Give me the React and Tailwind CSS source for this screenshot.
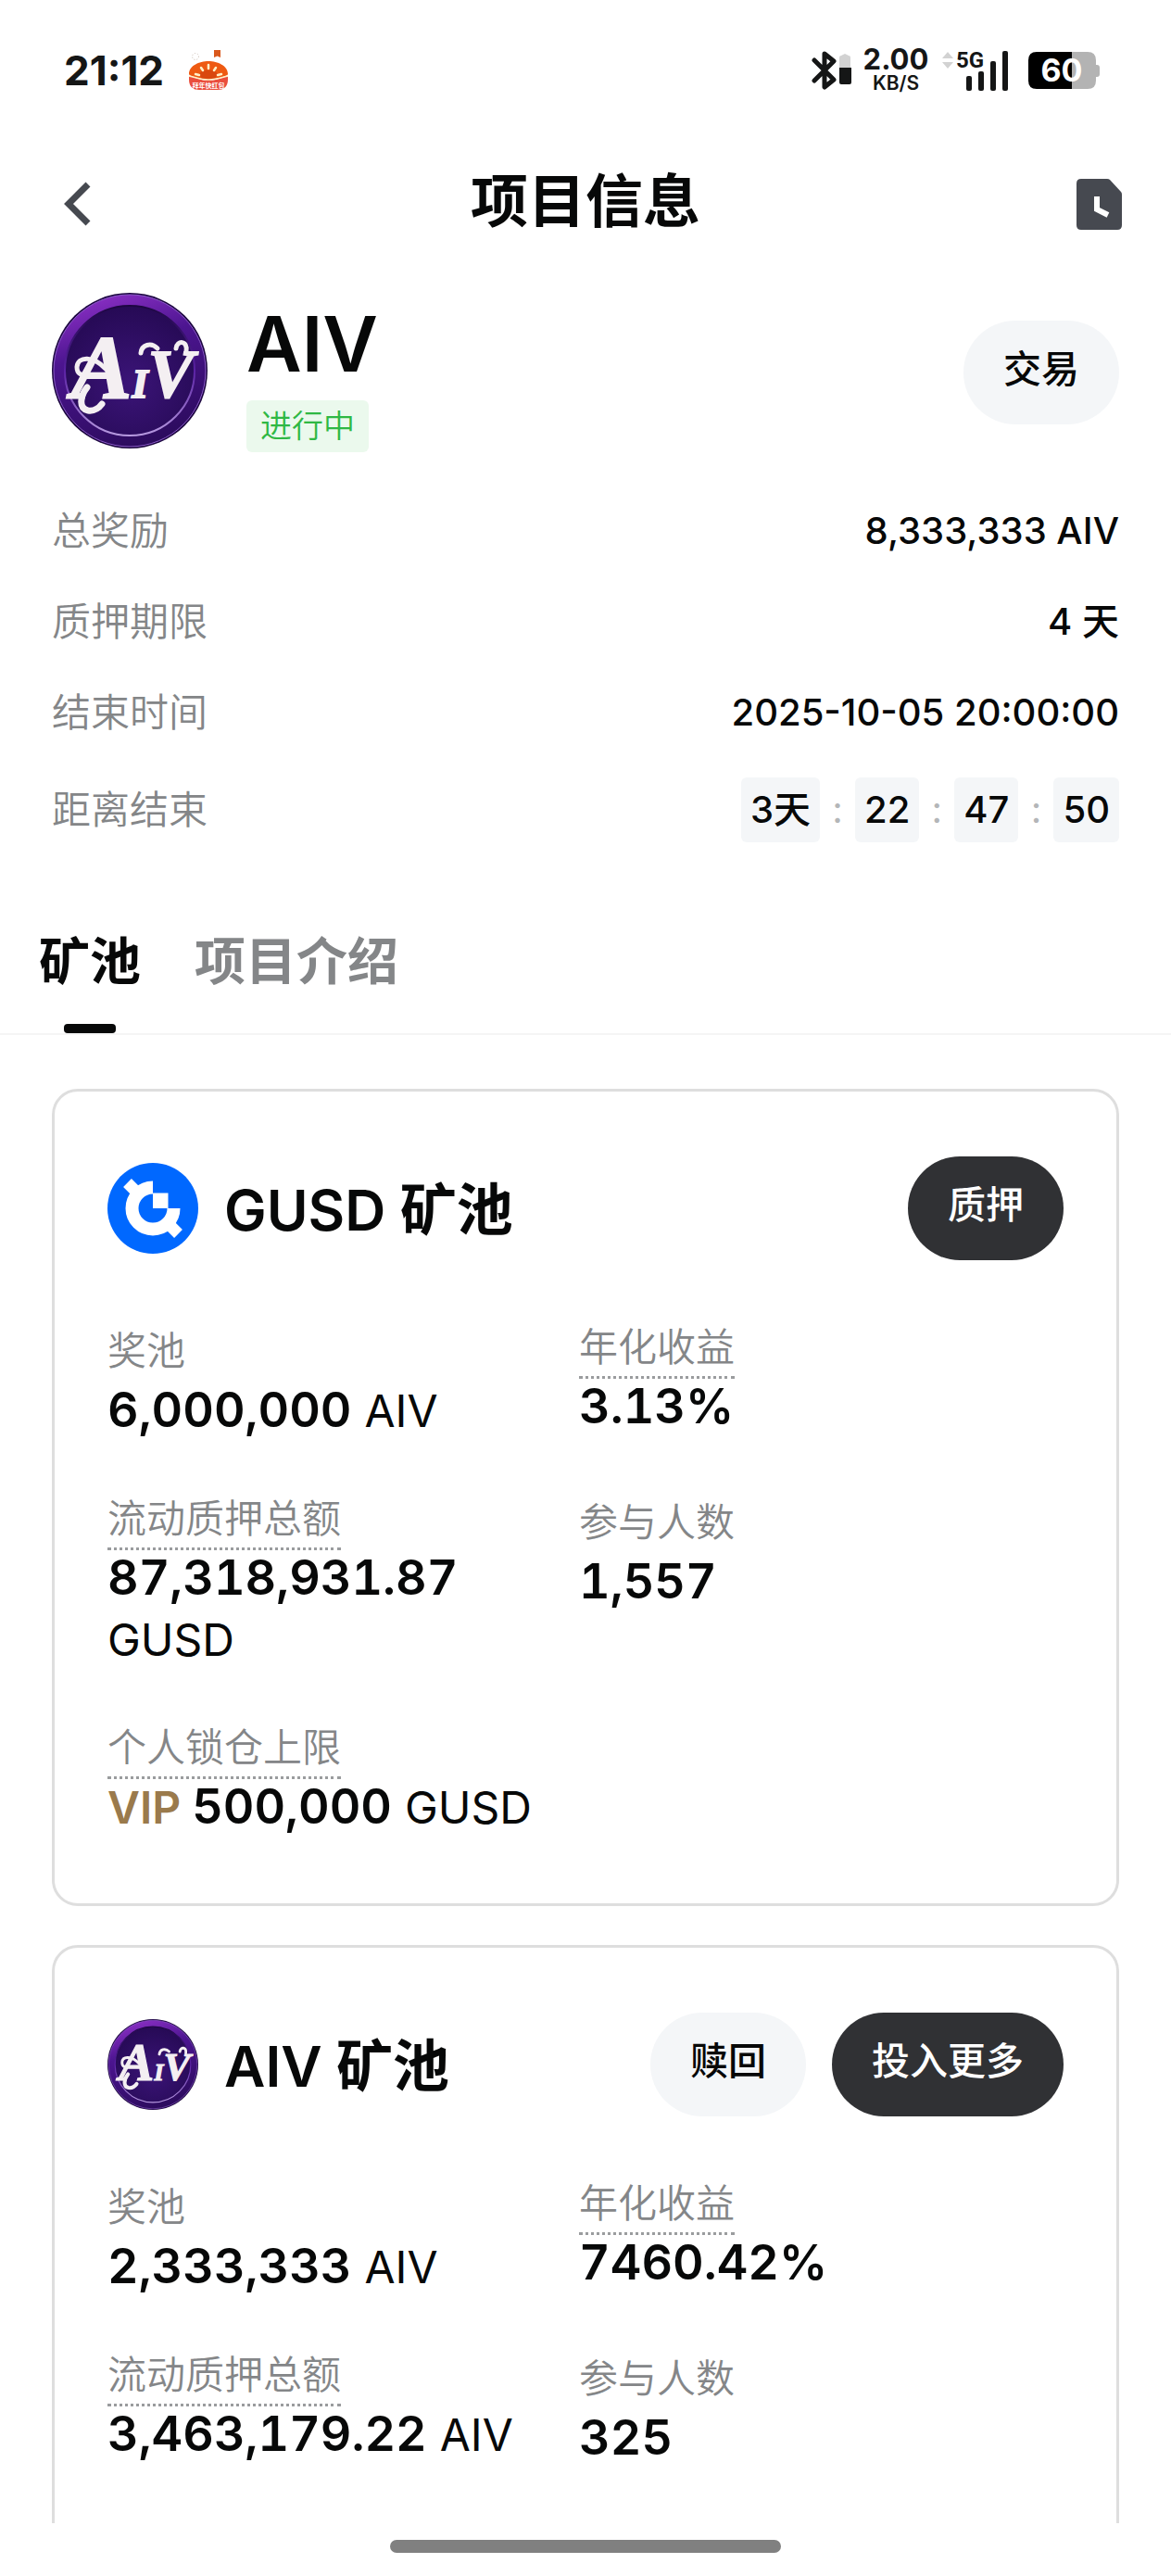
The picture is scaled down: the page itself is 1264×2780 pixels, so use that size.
import React, { useState } from "react";

const projectInfo = [
  { label: "总奖励", value: "8,333,333 AIV" },
  { label: "质押期限", value: "4 天" },
  { label: "结束时间", value: "2025-10-05 20:00:00" },
];

const countdown = ["3天", "22", "47", "50"];

const tabs = [
  { id: "pool", label: "矿池" },
  { id: "intro", label: "项目介绍" },
];

const pools = [
  {
    id: "gusd",
    name: "GUSD 矿池",
    icon: GusdIcon,
    actions: [{ label: "质押", primary: true }],
    stats: [
      { label: "奖池", value: "6,000,000", unit: "AIV" },
      { label: "年化收益", value: "3.13%", hint: true },
      { label: "流动质押总额", value: "87,318,931.87", unit: "GUSD", hint: true },
      { label: "参与人数", value: "1,557" },
      { label: "个人锁仓上限", value: "500,000", unit: "GUSD", hint: true, vip: true },
    ],
  },
  {
    id: "aiv",
    name: "AIV 矿池",
    icon: AivCoin,
    actions: [{ label: "赎回" }, { label: "投入更多", primary: true }],
    stats: [
      { label: "奖池", value: "2,333,333", unit: "AIV" },
      { label: "年化收益", value: "7460.42%", hint: true },
      { label: "流动质押总额", value: "3,463,179.22", unit: "AIV", hint: true },
      { label: "参与人数", value: "325" },
    ],
  },
];

function AivCoin({ className }) {
  return (
    <svg viewBox="0 0 168 168" className={className} role="img" aria-label="AIV">
      <defs>
        <linearGradient id="coinRim" x1="0.3" y1="0" x2="0.6" y2="1">
          <stop offset="0" stopColor="#8a2fc4" />
          <stop offset="0.35" stopColor="#4c1590" />
          <stop offset="1" stopColor="#2b0b5c" />
        </linearGradient>
        <radialGradient id="coinFace" cx="0.5" cy="0.6" r="0.6">
          <stop offset="0" stopColor="#3b1478" />
          <stop offset="1" stopColor="#260a55" />
        </radialGradient>
        <linearGradient id="coinEdge" x1="0" y1="0" x2="0" y2="1">
          <stop offset="0" stopColor="#1d0642" />
          <stop offset="0.5" stopColor="#5b22a5" />
          <stop offset="1" stopColor="#b79ae0" />
        </linearGradient>
      </defs>
      <circle cx="84" cy="84" r="84" fill="#1c0640" />
      <circle cx="84" cy="84" r="82" fill="url(#coinRim)" stroke="#8c5bc9" strokeWidth="1" />
      <circle cx="84" cy="84" r="70" fill="url(#coinFace)" stroke="url(#coinEdge)" strokeWidth="2" />
      {/* swashes */}
      <g fill="none" stroke="#f4eff2" strokeLinecap="round">
        <path d="M58 82C45 68 28 68 27 80c0 8 6 10 10 7" strokeWidth="5" />
        <path d="M38 102c-8 10-9 23 1 25 7 1 12-3 15-7" strokeWidth="7" />
        <path d="M96 65c1-9 11-12 18-5" strokeWidth="5" />
        <path d="M134 60c1-9 13-9 11 3" strokeWidth="5" />
      </g>
      <text
        x="21"
        y="113"
        fontFamily="'Liberation Serif', serif"
        fontWeight="700"
        fontStyle="italic"
        stroke="#f4eff2"
        strokeWidth="2"
        fill="#f4eff2"
      >
        <tspan fontSize="98">A</tspan>
        <tspan fontSize="44">I</tspan>
        <tspan fontSize="74">V</tspan>
      </text>
    </svg>
  );
}

function GusdIcon({ className }) {
  return (
    <svg viewBox="0 0 98 98" className={className} aria-hidden="true">
      <circle cx="49" cy="49" r="49" fill="#0068ff" />
      <path d="M49 26.500A22.500 22.500 0 1 0 71.500 49" fill="none" stroke="#fff" strokeWidth="14" />
      <rect x="49" y="32.500" width="16.500" height="16.500" fill="#fff" />
      <path d="M21.500 21.500 32 32M66 66l10.500 10.500" stroke="#fff" strokeWidth="12.500" />
    </svg>
  );
}

function RedPacketIcon() {
  return (
    <svg viewBox="0 0 44 46" className="h-[46px] w-[44px]" aria-hidden="true">
      <path d="M28 1h7v8l-3.500-1.500L28 9z" fill="#d9581c" />
      <circle cx="8" cy="8" r="3.500" fill="none" stroke="#c9b9ae" strokeWidth="1" strokeDasharray="1 2" />
      <path d="M1 27c0-9 11-14 21-14s21 5 21 14c0 2-9 4-21 7C10 31 1 29 1 27z" fill="#ee5a12" />
      <path d="M12 27c3-6 17-6 20 0l-3 5H15z" fill="#d9480f" />
      <path d="M1 29c9 2 13 5 21 5s13-3 21-5v4c0 8-5 11-11 11H12C6 44 1 41 1 33z" fill="#ea4e3d" />
      <path d="M1 29c9 2 13 4 21 4s13-2 21-4" fill="none" stroke="#fff1c9" strokeWidth="1.500" />
      <path d="M22 17v4M14 20l2 3M30 20l-2 3M8 27l4 1M36 27l-4 1" stroke="#fff1c9" strokeWidth="2.500" strokeLinecap="round" />
      <text x="22" y="42" textAnchor="middle" fontSize="7" fontWeight="700" fill="#fff" fontFamily="'Noto Sans CJK SC', sans-serif">
        拜年快红包
      </text>
    </svg>
  );
}

function StatusBar() {
  return (
    <div className="flex h-[152px] shrink-0 items-center justify-between pr-[76px] pl-[69px] text-[#151616]">
      <div className="flex items-center gap-[26px]">
        <span className="text-[44px] leading-[56px] font-bold">21:12</span>
        <RedPacketIcon />
      </div>
      <div className="flex items-center">
        {/* Bluetooth with device battery */}
        <svg viewBox="0 0 44 46" className="h-[46px] w-[44px]" aria-hidden="true">
          <path d="M3 12 24 33 14 41V5l10 8L3 34" fill="none" stroke="#151616" strokeWidth="5" strokeLinejoin="round" strokeLinecap="round" />
          <path d="M30 20V9q0-2 2-2l4-2 4 2q2 0 2 2v11z" fill="#d2d2d2" />
          <path d="M30 20h13v16q0 2-2 2h-9q-2 0-2-2z" fill="#151616" />
        </svg>
        <div className="ml-[12px] flex w-[70px] flex-col items-center">
          <span className="text-[31px] leading-[28px] font-bold">2.00</span>
          <span className="text-[21px] leading-[24px] font-semibold">KB/S</span>
        </div>
        <svg viewBox="0 0 74 46" className="ml-[14px] h-[46px] w-[74px] overflow-visible" aria-hidden="true">
          <path d="M1 10 7 3l6 7zM1 14h12l-6 7z" fill="#d2d2d2" />
          <text x="16" y="20" fontSize="24" fontWeight="700" fill="#151616" fontFamily="Roboto, sans-serif">5G</text>
          <g fill="#151616">
            <rect x="27" y="29" width="6" height="16" rx="2" />
            <rect x="40" y="24" width="6" height="21" rx="2" />
            <rect x="53" y="13" width="6" height="32" rx="2" />
            <rect x="66" y="2" width="6" height="43" rx="2" />
          </g>
        </svg>
        <svg viewBox="0 0 78 40" className="ml-[20px] h-[40px] w-[78px] overflow-visible" aria-hidden="true">
          <path d="M47 0h17q9 0 9 9v5h1q3 0 3 3v7q0 3-3 3h-1v4q0 9-9 9H47z" fill="#b3b3b3" />
          <path d="M9 0h38v40H9q-9 0-9-9V9q0-9 9-9z" fill="#000" />
          <text x="36" y="32" textAnchor="middle" fontSize="34" fontWeight="700" fill="#fff" fontFamily="Inter, sans-serif">60</text>
        </svg>
      </div>
    </div>
  );
}

function PillButton({ primary, children }) {
  return (
    <button
      type="button"
      className={`h-[112px] rounded-full px-[43px] pb-[6px] text-[41px] font-medium ${
        primary ? "bg-[#303134] text-white" : "bg-[#f4f6f8] text-[#070808]"
      }`}
    >
      {children}
    </button>
  );
}

function Stat({ label, value, unit, hint, vip }) {
  return (
    <div>
      <dt className={`text-[42px] leading-[56px] font-[350] text-[#848688] ${hint ? "" : "pt-1"}`}>
        <span className={hint ? "border-b-[3px] border-dotted border-[#9a9c9e] pb-[6px]" : ""}>{label}</span>
      </dt>
      <dd className={`mt-[3px] text-[52px] leading-[66px] font-semibold tabular-nums ${vip ? "whitespace-nowrap" : ""}`}>
        {vip && <span className="mr-3 text-[48px] text-[#9a7a4c]">VIP</span>}
        {value} {unit && <span className="text-[48px] font-normal">{unit}</span>}
      </dd>
    </div>
  );
}

function PoolCard({ pool }) {
  const Icon = pool.icon;

  return (
    <section className="rounded-[28px] border-[3px] border-[#dedede] px-[57px] pt-[70px] pb-[70px] last:pb-[120px]">
      <div className="flex items-center justify-between">
        <div className="flex items-center gap-[28px]">
          <Icon className="size-[98px]" />
          <h2 className="pt-[4px] text-[61px] leading-[72px] font-semibold">{pool.name}</h2>
        </div>
        <div className="flex gap-[28px]">
          {pool.actions.map((action) => (
            <PillButton key={action.label} primary={action.primary}>{action.label}</PillButton>
          ))}
        </div>
      </div>

      <dl className="mt-[66px] grid grid-cols-[37fr_38fr] gap-y-[55px]">
        {pool.stats.map((stat) => (
          <Stat key={stat.label} {...stat} />
        ))}
      </dl>
    </section>
  );
}

export default function App() {
  const [activeTab, setActiveTab] = useState("pool");

  return (
    <div className="flex h-screen flex-col bg-white font-[Inter,'Noto_Sans_CJK_SC',sans-serif] text-[#070808]">
      <StatusBar />

      {/* Header */}
      <header className="flex h-[136px] shrink-0 items-center justify-between px-[53px]">
        <button type="button" aria-label="返回">
          <svg viewBox="0 0 49 50" className="h-[50px] w-[49px]" aria-hidden="true">
            <path d="M42 4 21 25l21 21" fill="none" stroke="#464950" strokeWidth="7" />
          </svg>
        </button>
        <h1 className="pb-[4px] text-[62px] leading-[80px] font-bold">项目信息</h1>
        <button type="button" aria-label="记录">
          <svg viewBox="0 0 49 55" className="h-[55px] w-[49px]" aria-hidden="true">
            <path d="M5 0h28q2 0 3 1l12 13q1 1 1 3v33q0 5-5 5H5q-5 0-5-5V5q0-5 5-5z" fill="#464950" />
            <path d="M22 19v14l12 6" fill="none" stroke="#fff" strokeWidth="6" />
          </svg>
        </button>
      </header>

      <main className="min-h-0 flex-1 overflow-hidden">
        {/* Project summary */}
        <div className="flex items-center justify-between px-[56px] pt-[28px]">
          <div className="flex items-start gap-[42px]">
            <AivCoin className="size-[168px]" />
            <div className="flex flex-col items-start gap-[20px] pt-[16px]">
              <span className="text-[82px] leading-[80px] font-semibold">AIV</span>
              <span className="rounded-[6px] bg-[#ebf9ed] px-[15px] text-[34px] leading-[56px] font-[350] text-[#2fb844]">进行中</span>
            </div>
          </div>
          <PillButton>交易</PillButton>
        </div>

        <dl className="mt-[36px] px-[56px] text-[42px] leading-[98px]">
          {projectInfo.map((row) => (
            <div key={row.label} className="flex justify-between">
              <dt className="font-[350] text-[#848688]">{row.label}</dt>
              <dd className="text-[40px] font-medium">{row.value}</dd>
            </div>
          ))}
          <div className="flex h-[112px] items-center justify-between">
            <dt className="font-[350] text-[#848688]">距离结束</dt>
            <dd className="flex items-center text-[40px] leading-[70px] font-medium">
              {countdown.map((part, i) => (
                <React.Fragment key={i}>
                  {i > 0 && <span className="w-[38px] text-center font-normal text-[#b4b6b8]">:</span>}
                  <span className="rounded-[6px] bg-[#f4f6f8] px-[10px]">{part}</span>
                </React.Fragment>
              ))}
            </dd>
          </div>
        </dl>

        {/* Tabs */}
        <div role="tablist" className="mt-[67px] flex gap-[58px] border-b-2 border-[#f5f5f5] px-[42px]">
          {tabs.map((tab) => (
            <button
              key={tab.id}
              type="button"
              role="tab"
              aria-selected={activeTab === tab.id}
              onClick={() => setActiveTab(tab.id)}
              className={`flex flex-col items-center text-[55px] leading-[80px] font-bold ${
                activeTab === tab.id ? "text-[#070808]" : "text-[#848688]"
              }`}
            >
              {tab.label}
              <span className={`mt-[28px] h-[10px] w-[56px] rounded-[4px] ${activeTab === tab.id ? "bg-[#070808]" : ""}`} />
            </button>
          ))}
        </div>

        <div className="flex flex-col gap-[42px] px-[56px] pt-[58px]">
          {pools.map((pool) => (
            <PoolCard key={pool.id} pool={pool} />
          ))}
        </div>
      </main>

      {/* Home indicator */}
      <div className="flex h-[57px] shrink-0 justify-center pt-[18px]">
        <div className="h-[14px] w-1/3 rounded-full bg-[#808080]" />
      </div>
    </div>
  );
}
